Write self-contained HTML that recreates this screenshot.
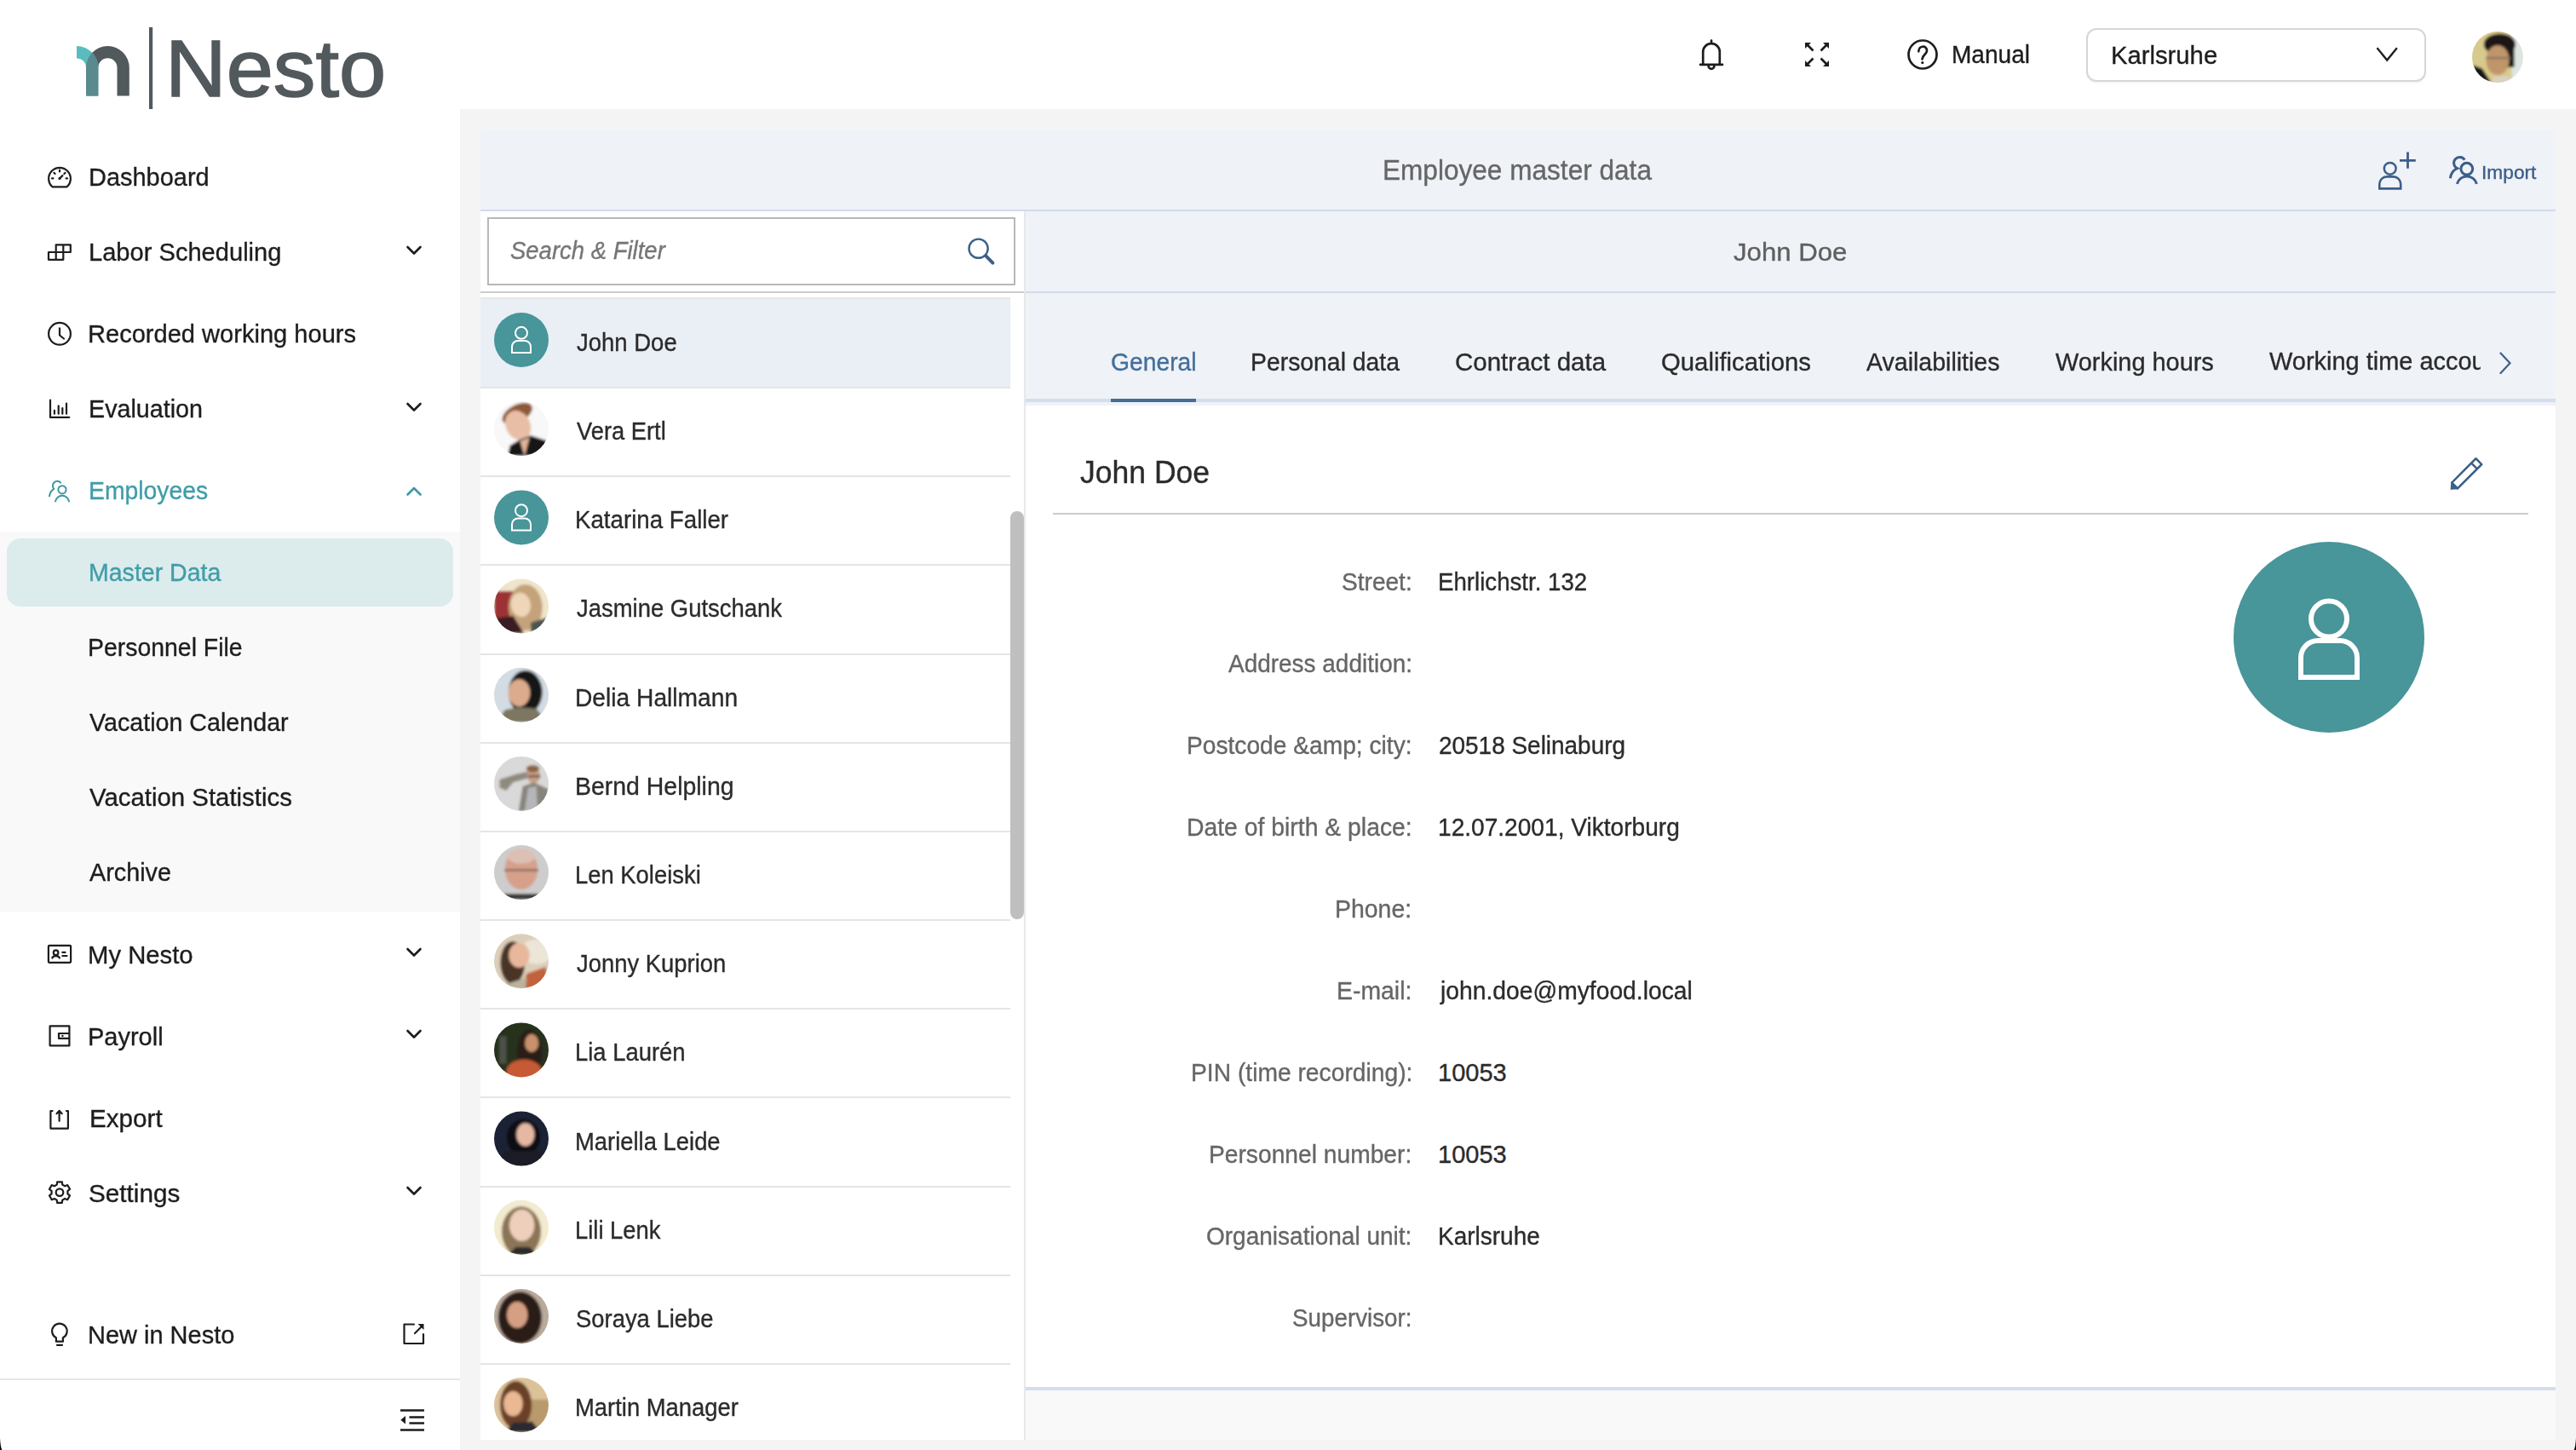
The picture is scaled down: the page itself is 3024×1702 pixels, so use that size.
<!DOCTYPE html>
<html><head><meta charset="utf-8"><title>Nesto - Employee master data</title>
<style>
*{margin:0;padding:0;box-sizing:border-box}
html,body{width:3024px;height:1702px;overflow:hidden;background:#f4f4f4;font-family:"Liberation Sans",sans-serif}
.a{position:absolute}
.t{position:absolute;white-space:nowrap;line-height:1;transform-origin:0 0;-webkit-text-stroke:0.35px currentColor}
svg.ov{position:absolute;left:0;top:0}
</style></head><body>
<div class="a" style="left:0px;top:0px;width:3024px;height:128px;background:#ffffff;"></div>
<div class="a" style="left:0px;top:128px;width:540px;height:1574px;background:#ffffff;"></div>
<div class="a" style="left:0px;top:624px;width:540px;height:447px;background:#f9f9f9;"></div>
<div class="a" style="left:8px;top:632px;width:524px;height:80px;background:#dcebeb;border-radius:16px;"></div>
<div class="a" style="left:0px;top:1618px;width:540px;height:2px;background:#e6e6e6;"></div>
<div class="a" style="left:564px;top:152px;width:2436px;height:94px;background:#eff2f7;"></div>
<div class="a" style="left:564px;top:246px;width:2436px;height:2px;background:#d1dcea;"></div>
<div class="a" style="left:564px;top:248px;width:638px;height:1442px;background:#ffffff;"></div>
<div class="a" style="left:1202px;top:248px;width:2px;height:1442px;background:#e8e8e8;"></div>
<div class="a" style="left:1204px;top:248px;width:1796px;height:94px;background:#eff2f7;"></div>
<div class="a" style="left:1204px;top:342px;width:1796px;height:2px;background:#d1dcea;"></div>
<div class="a" style="left:1204px;top:344px;width:1796px;height:132px;background:#eff2f7;"></div>
<div class="a" style="left:1204px;top:468px;width:1796px;height:4px;background:#d2deeb;"></div>
<div class="a" style="left:1304px;top:468px;width:100px;height:4px;background:#456d97;"></div>
<div class="a" style="left:1204px;top:476px;width:1796px;height:1152px;background:#ffffff;"></div>
<div class="a" style="left:1204px;top:1628px;width:1796px;height:4px;background:#d2deeb;"></div>
<div class="a" style="left:1204px;top:1632px;width:1796px;height:58px;background:#f9f9f9;"></div>
<div class="a" style="left:572px;top:255px;width:620px;height:80px;background:#ffffff;border:2px solid #b8b8b8;box-sizing:border-box;"></div>
<div class="a" style="left:564px;top:342px;width:638px;height:2px;background:#cccccc;"></div>
<div class="a" style="left:564px;top:349px;width:622px;height:2px;background:#e6e6e6;"></div>
<div class="a" style="left:564px;top:351px;width:622px;height:103px;background:#eaeef5;"></div>
<div class="a" style="left:564px;top:454px;width:622px;height:2px;background:#e5e5e5;"></div>
<div class="a" style="left:564px;top:558px;width:622px;height:2px;background:#e5e5e5;"></div>
<div class="a" style="left:564px;top:662px;width:622px;height:2px;background:#e5e5e5;"></div>
<div class="a" style="left:564px;top:767px;width:622px;height:2px;background:#e5e5e5;"></div>
<div class="a" style="left:564px;top:871px;width:622px;height:2px;background:#e5e5e5;"></div>
<div class="a" style="left:564px;top:975px;width:622px;height:2px;background:#e5e5e5;"></div>
<div class="a" style="left:564px;top:1079px;width:622px;height:2px;background:#e5e5e5;"></div>
<div class="a" style="left:564px;top:1183px;width:622px;height:2px;background:#e5e5e5;"></div>
<div class="a" style="left:564px;top:1287px;width:622px;height:2px;background:#e5e5e5;"></div>
<div class="a" style="left:564px;top:1392px;width:622px;height:2px;background:#e5e5e5;"></div>
<div class="a" style="left:564px;top:1496px;width:622px;height:2px;background:#e5e5e5;"></div>
<div class="a" style="left:564px;top:1600px;width:622px;height:2px;background:#e5e5e5;"></div>
<div class="a" style="left:564px;top:1704px;width:622px;height:2px;background:#e5e5e5;"></div>
<div class="a" style="left:1186px;top:600px;width:16px;height:479px;background:#bfbfbf;border-radius:8px;"></div>
<div class="a" style="left:1236px;top:602px;width:1732px;height:2px;background:#cccccc;"></div>
<div class="a" style="left:2449px;top:33px;width:399px;height:63px;background:#ffffff;border:2px solid #d6d6d6;border-radius:12px;box-sizing:border-box;box-shadow:0 2px 2px rgba(0,0,0,0.04);"></div>
<div class="t" style="left:103.67px;top:193.10px;font-size:30px;color:#1d1d1d;transform:scaleX(0.9650);">Dashboard</div>
<div class="t" style="left:103.66px;top:281.10px;font-size:30px;color:#1d1d1d;transform:scaleX(0.9696);">Labor Scheduling</div>
<div class="t" style="left:103.06px;top:377.10px;font-size:30px;color:#1d1d1d;transform:scaleX(0.9689);">Recorded working hours</div>
<div class="t" style="left:103.69px;top:465.10px;font-size:30px;color:#1d1d1d;transform:scaleX(0.9559);">Evaluation</div>
<div class="t" style="left:103.71px;top:561.10px;font-size:30px;color:#409da9;transform:scaleX(0.9448);">Employees</div>
<div class="t" style="left:104.10px;top:657.10px;font-size:30px;color:#409da9;transform:scaleX(0.9506);">Master Data</div>
<div class="t" style="left:103.11px;top:745.10px;font-size:30px;color:#1d1d1d;transform:scaleX(0.9471);">Personnel File</div>
<div class="t" style="left:105.00px;top:833.10px;font-size:30px;color:#1d1d1d;transform:scaleX(0.9551);">Vacation Calendar</div>
<div class="t" style="left:105.00px;top:921.10px;font-size:30px;color:#1d1d1d;transform:scaleX(0.9793);">Vacation Statistics</div>
<div class="t" style="left:105.00px;top:1009.10px;font-size:30px;color:#1d1d1d;transform:scaleX(0.9596);">Archive</div>
<div class="t" style="left:103.05px;top:1106.10px;font-size:30px;color:#1d1d1d;transform:scaleX(0.9758);">My Nesto</div>
<div class="t" style="left:103.07px;top:1202.10px;font-size:30px;color:#1d1d1d;transform:scaleX(0.9659);">Payroll</div>
<div class="t" style="left:105.02px;top:1298.10px;font-size:30px;color:#1d1d1d;transform:scaleX(0.9881);">Export</div>
<div class="t" style="left:104.01px;top:1385.60px;font-size:30px;color:#1d1d1d;transform:scaleX(0.9906);">Settings</div>
<div class="t" style="left:103.07px;top:1551.60px;font-size:30px;color:#1d1d1d;transform:scaleX(0.9659);">New in Nesto</div>
<div class="t" style="left:194.45px;top:32.67px;font-size:95px;color:#52595d;transform:scaleX(1.0441);-webkit-text-stroke:1.6px #52595d;">Nesto</div>
<div class="t" style="left:2291.07px;top:50.05px;font-size:29px;color:#1d1d1d;transform:scaleX(0.9674);">Manual</div>
<div class="t" style="left:2477.98px;top:50.95px;font-size:29px;color:#1d1d1d;transform:scaleX(1.0083);">Karlsruhe</div>
<div class="t" style="left:1623.21px;top:182.31px;font-size:34px;color:#666666;transform:scaleX(0.9288);">Employee master data</div>
<div class="t" style="left:2912.93px;top:192.17px;font-size:22px;color:#3c5e89;transform:scaleX(1.0333);">Import</div>
<div class="t" style="left:599.05px;top:279.95px;font-size:29px;color:#767676;font-style:italic;transform:scaleX(0.9479);">Search &amp; Filter</div>
<div class="t" style="left:676.50px;top:387.95px;font-size:29px;color:#2b2b2b;transform:scaleX(0.9480);">John Doe</div>
<div class="t" style="left:676.50px;top:492.13px;font-size:29px;color:#2b2b2b;transform:scaleX(0.9418);">Vera Ertl</div>
<div class="t" style="left:674.59px;top:596.31px;font-size:29px;color:#2b2b2b;transform:scaleX(0.9548);">Katarina Faller</div>
<div class="t" style="left:676.50px;top:700.49px;font-size:29px;color:#2b2b2b;transform:scaleX(0.9465);">Jasmine Gutschank</div>
<div class="t" style="left:674.56px;top:804.67px;font-size:29px;color:#2b2b2b;transform:scaleX(0.9720);">Delia Hallmann</div>
<div class="t" style="left:674.54px;top:908.85px;font-size:29px;color:#2b2b2b;transform:scaleX(0.9806);">Bernd Helpling</div>
<div class="t" style="left:674.61px;top:1013.03px;font-size:29px;color:#2b2b2b;transform:scaleX(0.9450);">Len Koleiski</div>
<div class="t" style="left:676.50px;top:1117.21px;font-size:29px;color:#2b2b2b;transform:scaleX(0.9450);">Jonny Kuprion</div>
<div class="t" style="left:674.61px;top:1221.39px;font-size:29px;color:#2b2b2b;transform:scaleX(0.9450);">Lia Laurén</div>
<div class="t" style="left:674.61px;top:1325.57px;font-size:29px;color:#2b2b2b;transform:scaleX(0.9450);">Mariella Leide</div>
<div class="t" style="left:674.61px;top:1429.75px;font-size:29px;color:#2b2b2b;transform:scaleX(0.9450);">Lili Lenk</div>
<div class="t" style="left:675.55px;top:1533.93px;font-size:29px;color:#2b2b2b;transform:scaleX(0.9450);">Soraya Liebe</div>
<div class="t" style="left:674.61px;top:1638.11px;font-size:29px;color:#2b2b2b;transform:scaleX(0.9450);">Martin Manager</div>
<div class="t" style="left:2034.60px;top:281.10px;font-size:30px;color:#5f5f5f;transform:scaleX(1.0391);">John Doe</div>
<div class="t" style="left:1304.06px;top:409.60px;font-size:30px;color:#436e99;transform:scaleX(0.9423);">General</div>
<div class="t" style="left:1468.11px;top:409.60px;font-size:30px;color:#2b2b2b;transform:scaleX(0.9454);">Personal data</div>
<div class="t" style="left:1708.02px;top:409.60px;font-size:30px;color:#2b2b2b;transform:scaleX(0.9832);">Contract data</div>
<div class="t" style="left:1950.02px;top:409.60px;font-size:30px;color:#2b2b2b;transform:scaleX(0.9775);">Qualifications</div>
<div class="t" style="left:2191.00px;top:409.60px;font-size:30px;color:#2b2b2b;transform:scaleX(0.9512);">Availabilities</div>
<div class="t" style="left:2413.00px;top:409.60px;font-size:30px;color:#2b2b2b;transform:scaleX(0.9635);">Working hours</div>
<div class="a" style="left:2660px;top:395px;width:252px;height:60px;overflow:hidden">
<div class="t" style="left:4.00px;top:14.10px;font-size:30px;color:#2b2b2b;transform:scaleX(0.965)">Working time account</div>
</div>
<div class="t" style="left:1267.61px;top:536.82px;font-size:36px;color:#2b2b2b;transform:scaleX(0.9868);">John Doe</div>
<div class="t" style="left:1575.13px;top:668.85px;font-size:29px;color:#666666;transform:scaleX(0.9683);">Street:</div>
<div class="t" style="left:1688.09px;top:668.85px;font-size:29px;color:#2b2b2b;transform:scaleX(0.9536);">Ehrlichstr. 132</div>
<div class="t" style="left:1441.50px;top:764.85px;font-size:29px;color:#666666;transform:scaleX(0.9640);">Address addition:</div>
<div class="t" style="left:1393.26px;top:860.85px;font-size:29px;color:#666666;transform:scaleX(0.9713);">Postcode &amp;amp; city:</div>
<div class="t" style="left:1689.04px;top:860.85px;font-size:29px;color:#2b2b2b;transform:scaleX(0.9634);">20518 Selinaburg</div>
<div class="t" style="left:1392.54px;top:956.85px;font-size:29px;color:#666666;transform:scaleX(0.9775);">Date of birth &amp; place:</div>
<div class="t" style="left:1688.06px;top:956.85px;font-size:29px;color:#2b2b2b;transform:scaleX(0.9689);">12.07.2001, Viktorburg</div>
<div class="t" style="left:1567.24px;top:1052.85px;font-size:29px;color:#666666;transform:scaleX(0.9807);">Phone:</div>
<div class="t" style="left:1569.34px;top:1148.85px;font-size:29px;color:#666666;transform:scaleX(0.9791);">E-mail:</div>
<div class="t" style="left:1690.97px;top:1148.85px;font-size:29px;color:#2b2b2b;transform:scaleX(0.9746);">john.doe@myfood.local</div>
<div class="t" style="left:1397.55px;top:1244.85px;font-size:29px;color:#666666;transform:scaleX(0.9734);">PIN (time recording):</div>
<div class="t" style="left:1688.00px;top:1244.85px;font-size:29px;color:#2b2b2b;">10053</div>
<div class="t" style="left:1419.26px;top:1340.85px;font-size:29px;color:#666666;transform:scaleX(0.9722);">Personnel number:</div>
<div class="t" style="left:1688.00px;top:1340.85px;font-size:29px;color:#2b2b2b;">10053</div>
<div class="t" style="left:1415.93px;top:1436.85px;font-size:29px;color:#666666;transform:scaleX(0.9660);">Organisational unit:</div>
<div class="t" style="left:1688.07px;top:1436.85px;font-size:29px;color:#2b2b2b;transform:scaleX(0.9653);">Karlsruhe</div>
<div class="t" style="left:1516.54px;top:1532.85px;font-size:29px;color:#666666;transform:scaleX(0.9583);">Supervisor:</div>
<svg class="ov" width="3024" height="1702" viewBox="0 0 3024 1702">
<path d="M101,112.6 L101,79.4 A25.4,25.4 0 0 1 151.8,79.4 L151.8,112.6 L137.5,112.6 L137.5,79.4 A11.1,11.1 0 0 0 115.3,79.4 L115.3,112.6 Z" fill="#52595d"/>
<defs><clipPath id="arch"><path d="M101,112.6 L101,79.4 A25.4,25.4 0 0 1 151.8,79.4 L151.8,112.6 L137.5,112.6 L137.5,79.4 A11.1,11.1 0 0 0 115.3,79.4 L115.3,112.6 Z"/></clipPath><filter id="soft" x="-10%" y="-10%" width="120%" height="120%"><feGaussianBlur stdDeviation="1.6"/></filter></defs>
<path d="M90,54 A25.4,25.4 0 0 1 115.4,79.4 L115.3,112.6 L101,112.6 L101,79.4 A11,11 0 0 0 90,68.4 Z" fill="#5bbcbf"/>
<path d="M90,54 A25.4,25.4 0 0 1 115.4,79.4 L115.3,112.6 L101,112.6 L101,79.4 A11,11 0 0 0 90,68.4 Z" fill="#5a8a8d" clip-path="url(#arch)"/>
<rect x="175" y="32" width="4.2" height="96" fill="#52595d"/>
<path d="M61.4,219.3 A12.9,12.9 0 1 1 78.6,219.3 Z" fill="none" stroke="#1d1d1d" stroke-width="2.2" stroke-linecap="round" stroke-linejoin="round"/>
<path d="M70,199.6 V201.4 M61,209.4 H62.4 M77.6,209.4 H79 M63.4,202.8 L64.6,204 M76.6,202.8 L75.4,204 M70,209.5 L73.4,206.1" fill="none" stroke="#1d1d1d" stroke-width="2.2" stroke-linecap="round" stroke-linejoin="round"/>
<circle cx="70" cy="209.4" r="1.6" fill="#1d1d1d"/>
<path d="M65.7,296 V287.4 H82.8 V296 Z M74.3,287.4 V304.8 M57,296 H74.3 V304.8 H57 Z M65.7,296 V304.8" fill="none" stroke="#1d1d1d" stroke-width="2.2" stroke-linecap="round" stroke-linejoin="round" stroke-width="1.9"/>
<circle cx="70" cy="391.8" r="12.9" fill="none" stroke="#1d1d1d" stroke-width="2.2" stroke-linecap="round" stroke-linejoin="round"/>
<path d="M70,385.3 V393.5 L75,397.5" fill="none" stroke="#1d1d1d" stroke-width="2.2" stroke-linecap="round" stroke-linejoin="round"/>
<path d="M59,469.5 V489.8 H81.3 M63.9,481.8 V485.7 M68.7,476.3 V485.7 M73.3,479 V485.7 M78,473.5 V485.7" fill="none" stroke="#1d1d1d" stroke-width="2.2" stroke-linecap="round" stroke-linejoin="round" stroke-width="2"/>
<path d="M71.2,566.6 A5,5 0 1 0 63.3,573.8 C60.5,575.5 58.5,578.5 58,582.3" fill="none" stroke="#3b98a4" stroke-width="2" stroke-linecap="round" stroke-linejoin="round"/>
<circle cx="73" cy="574.8" r="4.6" fill="none" stroke="#3b98a4" stroke-width="2" stroke-linecap="round" stroke-linejoin="round"/>
<path d="M65,588.5 A8.13,8.13 0 0 1 81,588.5" fill="none" stroke="#3b98a4" stroke-width="2" stroke-linecap="round" stroke-linejoin="round"/>
<path d="M478.5,290 L486,297.5 L493.5,290" fill="none" stroke="#1d1d1d" stroke-width="2.6" stroke-linecap="round" stroke-linejoin="round"/>
<path d="M478.5,474 L486,481.5 L493.5,474" fill="none" stroke="#1d1d1d" stroke-width="2.6" stroke-linecap="round" stroke-linejoin="round"/>
<path d="M478.5,580.5 L486,573.0 L493.5,580.5" fill="none" stroke="#3b98a4" stroke-width="2.6" stroke-linecap="round" stroke-linejoin="round"/>
<path d="M478.5,1114 L486,1121.5 L493.5,1114" fill="none" stroke="#1d1d1d" stroke-width="2.6" stroke-linecap="round" stroke-linejoin="round"/>
<path d="M478.5,1210 L486,1217.5 L493.5,1210" fill="none" stroke="#1d1d1d" stroke-width="2.6" stroke-linecap="round" stroke-linejoin="round"/>
<path d="M478.5,1394 L486,1401.5 L493.5,1394" fill="none" stroke="#1d1d1d" stroke-width="2.6" stroke-linecap="round" stroke-linejoin="round"/>
<rect x="56.9" y="1109.9" width="26.2" height="19.9" rx="1" fill="none" stroke="#1d1d1d" stroke-width="2.2" stroke-linecap="round" stroke-linejoin="round" stroke-width="2"/>
<circle cx="65.6" cy="1118.2" r="2.8" fill="none" stroke="#1d1d1d" stroke-width="2.2" stroke-linecap="round" stroke-linejoin="round" stroke-width="1.8"/>
<path d="M61.3,1124.5 C62.3,1121.3 68.9,1121.3 69.9,1124.5 M73.3,1117.8 H76.6 M73.3,1122 H78.6" fill="none" stroke="#1d1d1d" stroke-width="2.2" stroke-linecap="round" stroke-linejoin="round" stroke-width="1.8"/>
<path d="M58.6,1204.4 H81.4 V1227.3 H58.6 Z M81.4,1213 H69 V1218.9 H81.4" fill="none" stroke="#1d1d1d" stroke-width="2.2" stroke-linecap="round" stroke-linejoin="round" stroke-width="2"/>
<circle cx="73.4" cy="1215.9" r="1.2" fill="#1d1d1d"/>
<path d="M61.6,1304 H59.4 V1324.6 H79.9 V1304 H77.9 M69.6,1315.8 V1304 M66.5,1307.2 L69.6,1303.8 L72.7,1307.2" fill="none" stroke="#1d1d1d" stroke-width="2.2" stroke-linecap="round" stroke-linejoin="round" stroke-width="2"/>
<polygon points="66.72,1390.58 67.17,1387.32 72.83,1387.32 73.28,1390.58 76.17,1392.25 79.22,1391.01 82.05,1395.92 79.45,1397.93 79.45,1401.27 82.05,1403.28 79.22,1408.19 76.17,1406.95 73.28,1408.62 72.83,1411.88 67.17,1411.88 66.72,1408.62 63.83,1406.95 60.78,1408.19 57.95,1403.28 60.55,1401.27 60.55,1397.93 57.95,1395.92 60.78,1391.01 63.83,1392.25" fill="none" stroke="#1d1d1d" stroke-width="2.2" stroke-linecap="round" stroke-linejoin="round" stroke-width="2"/>
<circle cx="70" cy="1399.6" r="4.3" fill="none" stroke="#1d1d1d" stroke-width="2.2" stroke-linecap="round" stroke-linejoin="round" stroke-width="2"/>
<path d="M65.9,1574.7 V1570.3 A8.8,8.8 0 1 1 73.9,1570.3 V1574.7 Z M67,1578.8 H73" fill="none" stroke="#1d1d1d" stroke-width="2.2" stroke-linecap="round" stroke-linejoin="round" stroke-width="2"/>
<path d="M486,1554.5 H474.5 V1577 H497 V1566" fill="none" stroke="#1d1d1d" stroke-width="2.2" stroke-linecap="round" stroke-linejoin="round" stroke-width="2.2" stroke-linecap="butt"/>
<path d="M487,1565 L495,1557" fill="none" stroke="#1d1d1d" stroke-width="2.2" stroke-linecap="round" stroke-linejoin="round" stroke-width="2.2"/>
<path d="M490.5,1554 H497.5 V1561 Z" fill="#1d1d1d"/>
<path d="M470,1655.5 H498 M480.5,1663.5 H498 M480.5,1670.5 H498 M470,1678.5 H498" stroke="#1d1d1d" stroke-width="2.4"/>
<path d="M476,1662 V1671.5 L470.3,1666.7 Z" fill="#1d1d1d"/>
<path d="M0,1688 Q0.6,1699 2.4,1702 L0,1702 Z" fill="#000"/><path d="M3024,1688 Q3023.4,1699 3021.6,1702 L3024,1702 Z" fill="#000"/>
<path d="M1999.2,75.8 V61 A9.8,9.8 0 0 1 2018.8,61 V75.8 M1996,75.8 H2022 M2005.6,77.5 A3.4,3.4 0 0 0 2012.4,77.5 M2009,47.5 V50.8" fill="none" stroke="#1d1d1d" stroke-width="2.7" stroke-linecap="round" stroke-linejoin="round"/>
<path d="M2121,52 L2128.5,59.5 M2145,52 L2137.5,59.5 M2121,76 L2128.5,68.5 M2145,76 L2137.5,68.5" fill="none" stroke="#1d1d1d" stroke-width="2.7"/>
<path d="M2119,50 H2126 L2119,57 Z M2147,50 H2140 L2147,57 Z M2119,78 H2126 L2119,71 Z M2147,78 H2140 L2147,71 Z" fill="#1d1d1d"/>
<circle cx="2257" cy="64" r="16.5" fill="none" stroke="#1d1d1d" stroke-width="2.7" stroke-linecap="round" stroke-linejoin="round"/>
<path d="M2252.3,60.3 C2252.3,53 2262,53 2262,59.5 C2262,63.5 2257,64 2256.5,69.5" fill="none" stroke="#1d1d1d" stroke-width="2.7" stroke-linecap="round" stroke-linejoin="round" stroke-width="2.5"/>
<circle cx="2256.8" cy="73.6" r="1.6" fill="#1d1d1d"/>
<path d="M2790.5,56.3 L2802.2,70.6 L2813.9,56.3" fill="none" stroke="#1d1d1d" stroke-width="2.3" stroke-linejoin="miter"/>
<circle cx="2805.7" cy="197.8" r="6.9" fill="none" stroke="#3c5e89" stroke-width="2.5" stroke-linejoin="round"/>
<path d="M2793.3,221.4 V216 A8.7,8.7 0 0 1 2802,207.4 H2809.5 A8.7,8.7 0 0 1 2818.2,216 V221.4 Z" fill="none" stroke="#3c5e89" stroke-width="2.6" stroke-linejoin="miter"/>
<path d="M2826.5,178.6 V197.7 M2817,188.3 H2835.8" stroke="#3c5e89" stroke-width="2.8"/>
<path d="M2893.3,187.6 A6.9,6.9 0 1 0 2884.6,197.6 C2880,199.5 2877.2,203.5 2876.4,209.2" fill="none" stroke="#3c5e89" stroke-width="3"/>
<circle cx="2895.8" cy="198.2" r="6.9" fill="none" stroke="#3c5e89" stroke-width="3"/>
<path d="M2884.4,215.8 A11.9,11.9 0 0 1 2907.4,215.8" fill="none" stroke="#3c5e89" stroke-width="3"/>
<circle cx="1148.6" cy="291.7" r="11.1" fill="none" stroke="#3c5e89" stroke-width="2.4"/>
<path d="M1157.6,300.6 L1165.4,308.6" stroke="#3c5e89" stroke-width="4" stroke-linecap="round"/>
<path d="M2935.5,414.5 L2946.5,426.2 L2935.5,438" fill="none" stroke="#3c5e89" stroke-width="2.2" stroke-linecap="round"/>
<g transform="translate(2897.5,554) rotate(-45)"><rect x="-22.5" y="-4.8" width="40" height="9.6" fill="none" stroke="#3c5e89" stroke-width="2.5" stroke-linejoin="round"/><path d="M10,-4.8 V4.8" stroke="#3c5e89" stroke-width="2.5"/><path d="M-22.5,-6 L-29.5,0 L-22.5,6 Z" fill="#3c5e89"/></g>
<circle cx="612" cy="399" r="32" fill="#48959a"/>
<circle cx="612" cy="390.80" r="7.00" fill="none" stroke="#fff" stroke-width="2.00"/>
<path d="M601.00,414.00 V407.00 A7.00,7.00 0 0 1 608.00,400.00 H616.00 A7.00,7.00 0 0 1 623.00,407.00 V414.00 Z" fill="none" stroke="#fff" stroke-width="2.00" stroke-linejoin="miter"/>
<circle cx="612" cy="607.4" r="32" fill="#48959a"/>
<circle cx="612" cy="599.20" r="7.00" fill="none" stroke="#fff" stroke-width="2.00"/>
<path d="M601.00,622.40 V615.40 A7.00,7.00 0 0 1 608.00,608.40 H616.00 A7.00,7.00 0 0 1 623.00,615.40 V622.40 Z" fill="none" stroke="#fff" stroke-width="2.00" stroke-linejoin="miter"/>
<circle cx="2734" cy="748" r="112" fill="#48959a"/>
<circle cx="2734" cy="726.5" r="21" fill="none" stroke="#fff" stroke-width="6"/>
<path d="M2701,795 V772 A20,20 0 0 1 2721,752 H2747 A20,20 0 0 1 2767,772 V795 Z" fill="none" stroke="#fff" stroke-width="6"/>
<clipPath id="c612_503"><circle cx="612" cy="503.2" r="32"/></clipPath><g clip-path="url(#c612_503)"><g filter="url(#soft)">
<rect x="576" y="467.2" width="72" height="72" fill="#f8f8f8"/>
<ellipse cx="607.20" cy="485.60" rx="19.20" ry="10.24" fill="#8e5a38" transform="rotate(-28 607.20 485.60)"/>
<ellipse cx="608.16" cy="499.36" rx="14.40" ry="17.92" fill="#e8bfa6" transform="rotate(-28 608.16 499.36)"/>
<polygon points="596.00,535.20 598.56,523.04 610.40,516.00 623.20,511.20 642.40,517.60 647.20,535.20" fill="#151515"/>
<polygon points="610.40,517.60 621.60,513.44 615.84,535.20" fill="#e0b39a"/>
</g></g>
<clipPath id="c612_711"><circle cx="612" cy="711.5" r="32"/></clipPath><g clip-path="url(#c612_711)"><g filter="url(#soft)">
<rect x="576" y="675.5" width="72" height="72" fill="#eee5cb"/>
<rect x="580.00" y="693.90" width="22.40" height="51.20" fill="#9c3035"/>
<ellipse cx="616.80" cy="713.10" rx="19.84" ry="27.20" fill="#c4a27a"/>
<ellipse cx="611.36" cy="709.90" rx="11.52" ry="14.40" fill="#efd6b9" transform="rotate(-10 611.36 709.90)"/>
<polygon points="580.00,725.90 602.40,722.70 615.20,743.50 580.00,743.50" fill="#3a1b22"/>
<polygon points="623.20,730.70 644.00,724.30 644.00,743.50 623.20,743.50" fill="#4d5551"/>
</g></g>
<clipPath id="c612_815"><circle cx="612" cy="815.7" r="32"/></clipPath><g clip-path="url(#c612_815)"><g filter="url(#soft)">
<rect x="576" y="779.7" width="72" height="72" fill="#d3dbe3"/>
<ellipse cx="616.80" cy="812.50" rx="19.84" ry="25.60" fill="#121319"/>
<ellipse cx="609.44" cy="813.14" rx="12.80" ry="16.00" fill="#dcab8d"/>
<polygon points="583.20,847.70 592.80,833.30 608.80,830.10 629.60,831.70 642.40,847.70" fill="#7d7660"/>
</g></g>
<clipPath id="c612_919"><circle cx="612" cy="919.9" r="32"/></clipPath><g clip-path="url(#c612_919)"><g filter="url(#soft)">
<rect x="576" y="883.9" width="72" height="72" fill="#d9d9d9"/>
<polygon points="586.40,915.10 605.60,908.70 620.00,905.50 620.00,913.50 602.40,918.30 594.40,927.90 586.40,924.70" fill="#8e8a7e"/>
<polygon points="608.80,951.90 613.60,923.10 626.40,918.30 644.00,926.30 644.00,951.90" fill="#87847b"/>
<polygon points="615.84,951.90 620.00,924.70 629.60,923.10 631.20,951.90" fill="#b4b6b8"/>
<ellipse cx="626.40" cy="910.30" rx="7.68" ry="8.96" fill="#c79e84"/>
<ellipse cx="625.44" cy="902.30" rx="7.68" ry="4.16" fill="#8a6444"/>
<rect x="620.00" y="910.30" width="14.40" height="1.92" fill="#3a3a3a"/>
</g></g>
<clipPath id="c612_1024"><circle cx="612" cy="1024.1" r="32"/></clipPath><g clip-path="url(#c612_1024)"><g filter="url(#soft)">
<rect x="576" y="988.0999999999999" width="72" height="72" fill="#cdcdcd"/>
<ellipse cx="612.00" cy="1020.26" rx="19.20" ry="24.00" fill="#d6a08a"/>
<ellipse cx="612.00" cy="1004.90" rx="16.00" ry="8.96" fill="#dcc0b4"/>
<rect x="592.16" y="1020.26" width="39.68" height="2.24" fill="#7a625c"/>
<polygon points="580.00,1056.10 592.80,1049.06 631.20,1049.06 644.00,1056.10" fill="#3a3c3e"/>
</g></g>
<clipPath id="c612_1128"><circle cx="612" cy="1128.3" r="32"/></clipPath><g clip-path="url(#c612_1128)"><g filter="url(#soft)">
<rect x="576" y="1092.3" width="72" height="72" fill="#dccfba"/>
<ellipse cx="629.60" cy="1117.10" rx="19.20" ry="14.40" fill="#ece6d8"/>
<ellipse cx="601.76" cy="1129.90" rx="14.40" ry="24.96" fill="#4a3526"/>
<ellipse cx="609.44" cy="1121.26" rx="12.16" ry="14.40" fill="#e8b79c"/>
<polygon points="612.00,1160.30 618.40,1142.70 640.80,1134.70 644.00,1160.30" fill="#c2623a"/>
<polygon points="592.80,1155.50 618.40,1147.50 616.80,1160.30 592.80,1160.30" fill="#b9b29c"/>
</g></g>
<clipPath id="c612_1232"><circle cx="612" cy="1232.4" r="32"/></clipPath><g clip-path="url(#c612_1232)"><g filter="url(#soft)">
<rect x="576" y="1196.4" width="72" height="72" fill="#26301f"/>
<rect x="586.40" y="1216.40" width="8.00" height="32.00" fill="#4c5148"/>
<ellipse cx="621.60" cy="1234.00" rx="14.40" ry="25.60" fill="#2a1f18"/>
<ellipse cx="624.16" cy="1224.40" rx="8.00" ry="10.56" fill="#c8916d"/>
<ellipse cx="615.20" cy="1258.00" rx="20.80" ry="14.40" fill="#c65a34"/>
</g></g>
<clipPath id="c612_1336"><circle cx="612" cy="1336.6" r="32"/></clipPath><g clip-path="url(#c612_1336)"><g filter="url(#soft)">
<rect x="576" y="1300.6" width="72" height="72" fill="#1d2236"/>
<ellipse cx="614.56" cy="1335.00" rx="19.84" ry="21.76" fill="#101014"/>
<ellipse cx="616.80" cy="1331.80" rx="10.56" ry="13.44" fill="#e4b8a3"/>
<polygon points="580.00,1368.60 592.80,1351.00 634.40,1351.00 644.00,1368.60" fill="#1b1d28"/>
</g></g>
<clipPath id="c612_1440"><circle cx="612" cy="1440.8" r="32"/></clipPath><g clip-path="url(#c612_1440)"><g filter="url(#soft)">
<rect x="576" y="1404.8" width="72" height="72" fill="#f2ebcf"/>
<ellipse cx="612.00" cy="1445.60" rx="23.04" ry="29.44" fill="#8c7457"/>
<ellipse cx="612.64" cy="1438.24" rx="14.72" ry="18.56" fill="#eecfbb"/>
<polygon points="596.00,1472.80 605.60,1463.84 621.60,1463.84 631.20,1472.80" fill="#2b2a2a"/>
</g></g>
<clipPath id="c612_1545"><circle cx="612" cy="1545.0" r="32"/></clipPath><g clip-path="url(#c612_1545)"><g filter="url(#soft)">
<rect x="576" y="1509.0" width="72" height="72" fill="#b9aa9c"/>
<ellipse cx="610.40" cy="1546.60" rx="25.60" ry="30.40" fill="#2b1a12"/>
<ellipse cx="607.20" cy="1543.40" rx="12.16" ry="15.36" fill="#d49f83"/>
</g></g>
<clipPath id="c612_1649"><circle cx="612" cy="1649.2" r="32"/></clipPath><g clip-path="url(#c612_1649)"><g filter="url(#soft)">
<rect x="576" y="1613.2" width="72" height="72" fill="#dcc29a"/>
<rect x="620.00" y="1642.80" width="25.60" height="38.40" fill="#b89a6c"/>
<ellipse cx="605.60" cy="1649.20" rx="18.56" ry="28.16" fill="#6a3f25"/>
<ellipse cx="602.40" cy="1647.60" rx="11.20" ry="14.72" fill="#eab893"/>
<polygon points="592.80,1681.20 602.40,1670.00 624.80,1668.40 634.40,1681.20" fill="#2a2a30"/>
</g></g>
<clipPath id="c2932_67"><circle cx="2932" cy="67" r="30"/></clipPath><g clip-path="url(#c2932_67)"><g filter="url(#soft)">
<rect x="2898" y="33" width="68" height="68" fill="#d8c98c"/>
<rect x="2948.50" y="37.00" width="18.00" height="60.00" fill="#dfe6e2"/>
<ellipse cx="2934.40" cy="52.00" rx="18.60" ry="12.60" fill="#1d1814"/>
<rect x="2942.50" y="52.00" width="9.00" height="27.00" fill="#1d1814"/>
<ellipse cx="2932.00" cy="70.60" rx="13.50" ry="17.40" fill="#c0956a"/>
<rect x="2918.50" y="67.00" width="28.50" height="2.10" fill="#7a7168"/>
<polygon points="2902.00,76.00 2914.00,80.50 2924.50,97.00 2902.00,97.00" fill="#151515"/>
<polygon points="2924.50,97.00 2927.50,89.50 2945.50,89.50 2950.00,97.00" fill="#d9d2c2"/>
</g></g>
</svg>
</body></html>
